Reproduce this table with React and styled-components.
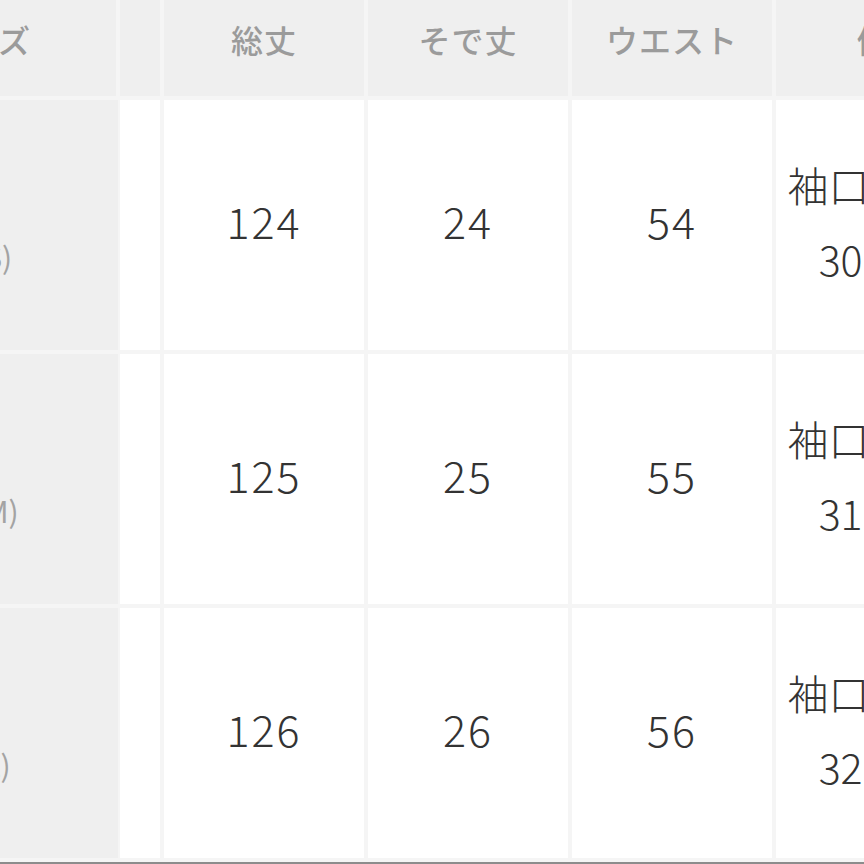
import React from "react";
import styled, { createGlobalStyle } from "styled-components";

const GlobalStyle = createGlobalStyle`
  html, body {
    margin: 0;
    padding: 0;
    background: #ffffff;
  }
  body {
    font-family: "Noto Sans CJK JP", "Noto Sans", sans-serif;
  }
`;

const Viewport = styled.div`
  width: 864px;
  height: 864px;
  overflow: hidden;
  background: #ffffff;
`;

const Table = styled.div`
  display: grid;
  grid-template-columns: 268px 40px 200px 200px 200px 228px;
  grid-template-rows: 96px repeat(3, 250px);
  gap: 4px;
  margin-left: -152px;
  width: max-content;
  padding-bottom: 4px;
  background: #f5f5f5;
  border-bottom: 3px solid #8c8c8c;
`;

const HeadCell = styled.div`
  display: flex;
  align-items: center;
  justify-content: center;
  padding-bottom: 18px;
  box-sizing: border-box;
  background: #efefef;
  color: #9b9b9b;
  font-size: 32px;
  font-weight: 500;
  letter-spacing: 1px;
  white-space: nowrap;
`;

const SizeCell = styled.div`
  display: flex;
  flex-direction: column;
  justify-content: center;
  padding-left: 126px;
  margin-right: -2px;
  background: #efefef;
  color: #a3a3a3;
  font-size: 30px;
  line-height: 62px;
`;

const Cell = styled.div`
  display: flex;
  flex-direction: column;
  align-items: center;
  justify-content: center;
  padding-bottom: ${(p) => (p.$note ? "8px" : "10px")};
  box-sizing: border-box;
  background: #ffffff;
  color: #333333;
  font-size: ${(p) => (p.$note ? "41px" : "43px")};
  font-weight: 300;
  letter-spacing: ${(p) => (p.$note ? "0" : "2px")};
  line-height: ${(p) => (p.$note ? "74px" : "1")};
  white-space: pre;
`;

const headers = ["サイズ", "", "総丈", "そで丈", "ウエスト", "備考"];

const rows = [
  { size: "S", length: 124, sleeve: 24, waist: 54, cuff: "30.5 cm" },
  { size: "M", length: 125, sleeve: 25, waist: 55, cuff: "31.5 cm" },
  { size: "L", length: 126, sleeve: 26, waist: 56, cuff: "32.5 cm" },
];

const App = () => {
  return (
    <Viewport>
      <GlobalStyle />
      <Table>
        {headers.map((h, i) => (
          <HeadCell key={i}>{h}</HeadCell>
        ))}
        {rows.map((r) => (
          <React.Fragment key={r.size}>
            <SizeCell>
              <span>{r.size}</span>
              <span>({r.size})</span>
            </SizeCell>
            <Cell />
            <Cell>{r.length}</Cell>
            <Cell>{r.sleeve}</Cell>
            <Cell>{r.waist}</Cell>
            <Cell $note>
              <span>袖口まわり</span>
              <span>{r.cuff}</span>
            </Cell>
          </React.Fragment>
        ))}
      </Table>
    </Viewport>
  );
};

export default App;
